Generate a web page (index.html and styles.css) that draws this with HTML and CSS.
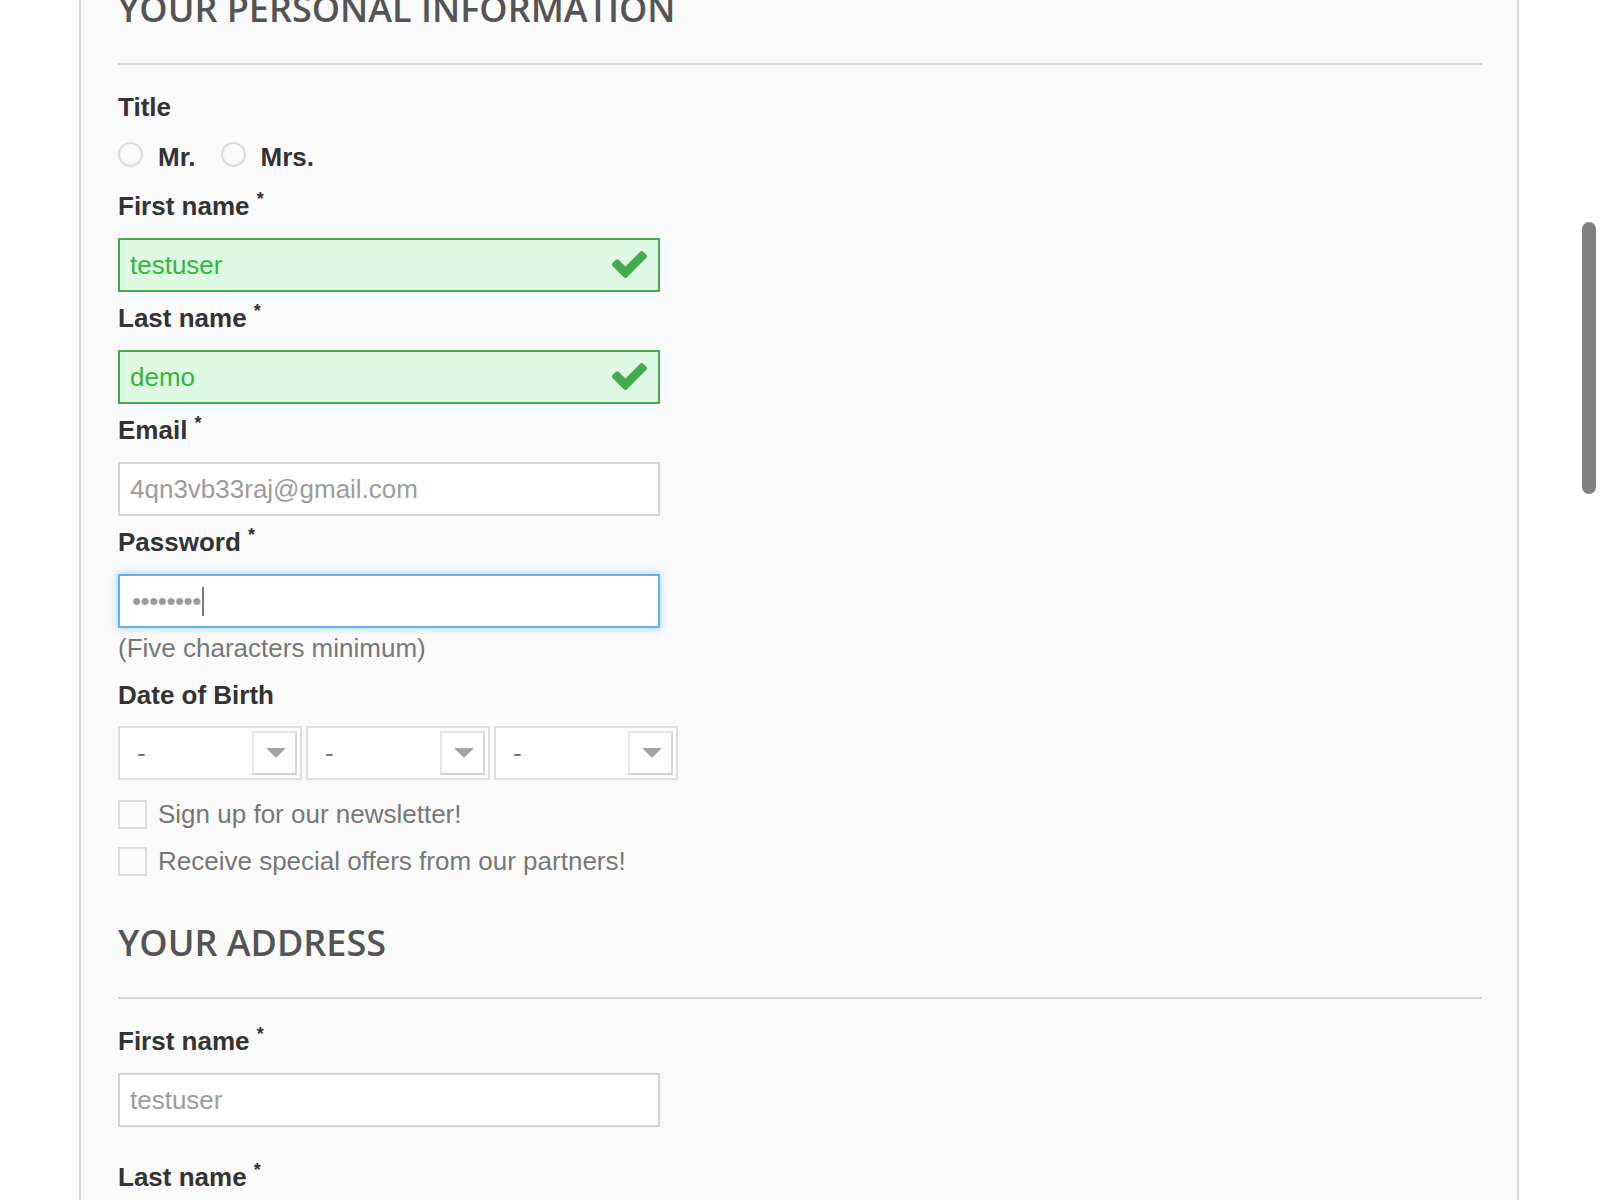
FILE: index.html
```html
<!DOCTYPE html>
<html lang="en">
<head>
<meta charset="utf-8">
<title>Create an account</title>
<link rel="stylesheet" href="styles.css">
</head>
<body>
<div class="panel">
  <section class="section personal">
    <h3 class="subheading">Your personal information</h3>

    <div class="title-group">
      <label class="label">Title</label>
      <div class="radio-row">
        <label class="radio-item"><input type="radio" name="gender" class="radio"><span>Mr.</span></label>
        <label class="radio-item"><input type="radio" name="gender" class="radio"><span>Mrs.</span></label>
      </div>
    </div>

    <div class="field">
      <label class="label">First name <sup>*</sup></label>
      <div class="control ok">
        <input class="input" type="text" value="testuser" readonly>
        <svg class="check" viewBox="121 334 1550 1188" width="35" height="27" aria-hidden="true"><path d="M1671 566q0 40-28 68l-724 724-136 136q-28 28-68 28t-68-28l-136-136-362-362q-28-28-28-68t28-68l136-136q28-28 68-28t68 28l294 295 656-657q28-28 68-28t68 28l136 136q28 28 28 68z"/></svg>
      </div>
    </div>

    <div class="field">
      <label class="label">Last name <sup>*</sup></label>
      <div class="control ok">
        <input class="input" type="text" value="demo" readonly>
        <svg class="check" viewBox="121 334 1550 1188" width="35" height="27" aria-hidden="true"><path d="M1671 566q0 40-28 68l-724 724-136 136q-28 28-68 28t-68-28l-136-136-362-362q-28-28-28-68t28-68l136-136q28-28 68-28t68 28l294 295 656-657q28-28 68-28t68 28l136 136q28 28 28 68z"/></svg>
      </div>
    </div>

    <div class="field">
      <label class="label">Email <sup>*</sup></label>
      <div class="control">
        <input class="input" type="text" value="4qn3vb33raj@gmail.com" readonly>
      </div>
    </div>

    <div class="field field-password">
      <label class="label">Password <sup>*</sup></label>
      <div class="control">
        <div class="input input-focus"><span class="dots">&#8226;&#8226;&#8226;&#8226;&#8226;&#8226;&#8226;&#8226;</span><span class="caret"></span></div>
      </div>
      <p class="hint">(Five characters minimum)</p>
    </div>

    <div class="dob">
      <label class="label">Date of Birth</label>
      <div class="selects">
        <div class="select"><span class="select-text">-</span><span class="select-btn"><i class="tri"></i></span></div>
        <div class="select"><span class="select-text">-</span><span class="select-btn"><i class="tri"></i></span></div>
        <div class="select"><span class="select-text">-</span><span class="select-btn"><i class="tri"></i></span></div>
      </div>
    </div>

    <div class="checks">
      <label class="check-row"><input type="checkbox" class="checkbox"><span>Sign up for our newsletter!</span></label>
      <label class="check-row"><input type="checkbox" class="checkbox"><span>Receive special offers from our partners!</span></label>
    </div>
  </section>

  <section class="section address">
    <h3 class="subheading">Your address</h3>

    <div class="field">
      <label class="label">First name <sup>*</sup></label>
      <div class="control">
        <input class="input" type="text" value="testuser" readonly>
      </div>
    </div>

    <div class="field">
      <label class="label">Last name <sup>*</sup></label>
      <div class="control">
        <input class="input" type="text" value="demo" readonly>
      </div>
    </div>
  </section>
</div>
<div class="scroll-thumb"></div>
</body>
</html>
```

FILE: styles.css
```css
html, body {
  margin: 0;
  padding: 0;
  height: 100%;
  overflow: hidden;
  background: #ffffff;
}

body {
  font-family: "Liberation Sans", Arial, sans-serif;
  font-size: 26px;
  line-height: 36px;
  color: #777777;
}

.panel {
  box-sizing: border-box;
  width: 1440px;
  margin: -20px 0 0 79px;
  padding: 5px 35px 40px 37px;
  background: #fafafa;
  border: 2px solid #d6d4d4;
}

.subheading {
  margin: 0 0 24px;
  padding: 0 0 32px;
  font-family: "Open Sans", "Liberation Sans", sans-serif;
  font-weight: 600;
  font-size: 36px;
  line-height: 44px;
  color: #555454;
  text-transform: uppercase;
  border-bottom: 2px solid #d6d4d4;
}

.address {
  margin-top: 42px;
}

.address .subheading {
  margin-bottom: 24px;
}

.label {
  display: block;
  font-weight: bold;
  color: #333333;
  line-height: 36px;
}

.label sup {
  font-size: 18px;
  line-height: 0;
}

.title-group .label {
  margin-bottom: 14px;
}

.radio-row {
  display: flex;
  gap: 25px;
  margin-bottom: 13px;
}

.radio-item {
  display: flex;
  align-items: flex-start;
  gap: 15px;
  font-weight: bold;
  color: #333333;
}

.radio {
  appearance: none;
  -webkit-appearance: none;
  box-sizing: border-box;
  width: 25px;
  height: 25px;
  margin: 3px 0 0;
  border-radius: 50%;
  border: 2px solid #dcdcdc;
  background: #fbfbfb;
  box-shadow: inset 0 -1px 2px rgba(0, 0, 0, 0.06);
}

.field {
  margin-bottom: 8px;
}

.address .field {
  margin-bottom: 32px;
}

.field .label {
  margin-bottom: 14px;
}

.control {
  position: relative;
  width: 542px;
}

.input {
  display: block;
  box-sizing: border-box;
  width: 542px;
  height: 54px;
  margin: 0;
  padding: 0 10px;
  border: 2px solid #d6d4d4;
  background: #ffffff;
  font-family: "Liberation Sans", Arial, sans-serif;
  font-size: 26px;
  color: #9c9b9b;
  outline: none;
}

.ok .input {
  background: #ddf9e1;
  border-color: #46a74e;
  color: #35b33f;
}

.check {
  position: absolute;
  right: 13px;
  top: 13px;
  fill: #46a74e;
}

.input-focus {
  display: flex;
  align-items: center;
  border-color: #66afe9;
  box-shadow: 0 0 8px rgba(102, 175, 233, 0.6);
}

.dots {
  color: #9c9b9b;
  letter-spacing: -0.5px;
  padding-left: 2px;
}

.caret {
  display: inline-block;
  width: 2px;
  height: 29px;
  margin-left: 1px;
  background: #7a7a7a;
}

.hint {
  margin: 2px 0 0;
  color: #777777;
  line-height: 36px;
}

.field-password {
  margin-bottom: 11px;
}

.dob .label {
  margin-bottom: 13px;
}

.selects {
  display: flex;
  gap: 4px;
}

.select {
  box-sizing: border-box;
  width: 184px;
  height: 54px;
  display: flex;
  align-items: stretch;
  padding: 3px;
  border: 2px solid #dedede;
  background: #ffffff;
}

.select-text {
  flex: 1;
  display: flex;
  align-items: center;
  padding-left: 14px;
  color: #777777;
}

.select-btn {
  box-sizing: border-box;
  width: 45px;
  display: flex;
  align-items: center;
  justify-content: center;
  border: 2px solid #e6e6e6;
  border-right-color: #d6d6d6;
  border-bottom-color: #d0d0d0;
  background: #ffffff;
}

.tri {
  display: block;
  width: 0;
  height: 0;
  margin-left: 2px;
  border-left: 10px solid transparent;
  border-right: 10px solid transparent;
  border-top: 10px solid #a3a3a3;
}

.checks {
  display: flex;
  flex-direction: column;
  gap: 11px;
  margin-top: 16px;
}

.check-row {
  display: flex;
  align-items: center;
  gap: 11px;
  color: #777777;
}

.checkbox {
  appearance: none;
  -webkit-appearance: none;
  box-sizing: border-box;
  width: 29px;
  height: 29px;
  margin: 1px 0 0;
  border: 2px solid #dcdcdc;
  background: #fcfcfc;
}

.scroll-thumb {
  position: fixed;
  top: 222px;
  right: 4px;
  width: 14px;
  height: 272px;
  border-radius: 7px;
  background: #808080;
}
```
